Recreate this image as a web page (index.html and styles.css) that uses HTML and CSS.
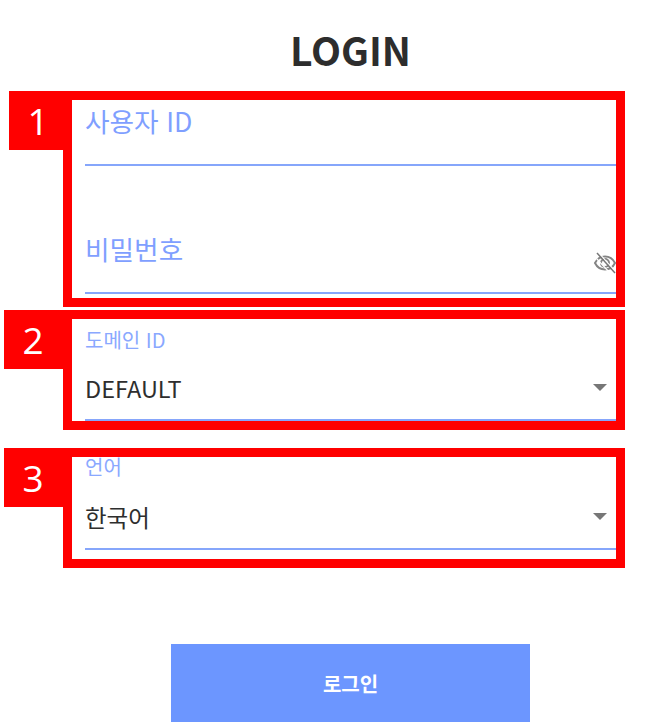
FILE: index.html
```html
<!DOCTYPE html>
<html lang="ko">
<head>
    <meta charset="UTF-8">
    <meta name="viewport" content="width=device-width, initial-scale=1.0">
    <title>LOGIN</title>
    <link rel="stylesheet" href="styles.css">
</head>
<body>
    <h1 class="title">LOGIN</h1>

    <form class="login-form">
        <!-- 1: 계정 -->
        <div class="group group-account">
            <div class="badge badge-wide">1</div>
            <div class="field field-id">
                <span class="field-label">사용자 ID</span>
            </div>
            <div class="field field-password">
                <span class="field-label">비밀번호</span>
                <svg class="eye-icon" viewBox="0 0 24 24" width="24" height="24" fill="none" stroke="#858585" stroke-width="2">
                    <path d="M2 12C4 8 7.500 5.500 12 5.500S20 8 22 12c-2 4-5.500 6.500-10 6.500S4 16 2 12z"/>
                    <circle cx="12" cy="12" r="4"/>
                    <path d="M7 3.500l15 16.500M3.500 7.500l13 14" stroke="#fff" stroke-width="1.200"/>
                    <path d="M4 2l18 20" stroke="#777" stroke-width="1.500"/>
                </svg>
            </div>
        </div>

        <!-- 2: 도메인 -->
        <div class="group group-domain">
            <div class="badge">2</div>
            <div class="field field-select">
                <span class="select-label">도메인 ID</span>
                <span class="select-value">DEFAULT</span>
                <span class="arrow"></span>
            </div>
        </div>

        <!-- 3: 언어 -->
        <div class="group group-lang">
            <div class="badge">3</div>
            <div class="field field-select">
                <span class="select-label">언어</span>
                <span class="select-value">한국어</span>
                <span class="arrow"></span>
            </div>
        </div>

        <button class="btn" type="button">로그인</button>
    </form>
</body>
</html>
```

FILE: styles.css
```css
body {
    margin: 0;
    background: #fff;
    font-family: "Noto Sans CJK KR", "Noto Sans", sans-serif;
    color: #2b2b2b;
}
.title {
    margin: 0;
    padding-left: 38px;
    height: 91px;
    line-height: 98px;
    font-size: 39px;
    font-weight: 700;
    text-align: center;
    color: #2d2d2d;
}
.login-form {
    display: flex;
    flex-direction: column;
    width: 562px;
    margin-left: 63px;
}

/* 빨간 표시 박스 */
.group {
    position: relative;
    box-sizing: border-box;
    border: 9px solid #f00;
    padding-left: 13px;
    background: #fff;
}
.group-account { height: 216px; }
.group-domain { height: 120px; margin-top: 3px; }
.group-lang { height: 120px; margin-top: 18px; }
.badge {
    position: absolute;
    top: -9px;
    left: -68px;
    box-sizing: border-box;
    width: 68px;
    height: 59px;
    padding-right: 10px;
    background: #f00;
    color: #fff;
    font-family: "Open Sans", sans-serif;
    font-size: 37px;
    line-height: 59px;
    text-align: center;
}
.badge-wide {
    left: -63px;
    width: 63px;
    padding-right: 5px;
}

/* 입력 필드 */
.field {
    position: relative;
    box-sizing: border-box;
    border-bottom: 2px solid #86a6fb;
}
.field-id { height: 66px; }
.field-password { height: 128px; }
.field-label {
    display: block;
    font-size: 26.7px;
    line-height: 42px;
    color: #7f9fff;
}
.field-password .field-label { padding-top: 62px; }
.eye-icon {
    position: absolute;
    right: -1px;
    top: 85px;
}
.field-select {
    display: flex;
    flex-direction: column;
    height: 102px;
}
.group-lang .field-select { height: 98px; margin-top: -5px; }
.select-label {
    margin-top: 8px;
    font-size: 20px;
    line-height: 26px;
    color: #8aa8ff;
}
.group-lang .select-label { margin-top: 2px; }
.select-value {
    margin-top: 18px;
    font-size: 23.5px;
    line-height: 34px;
    color: #2e2e2e;
}
.group-lang .select-value { font-size: 23.5px; margin-top: 20px; }
.arrow {
    position: absolute;
    right: 9px;
    top: 65px;
    width: 0;
    height: 0;
    border-left: 7px solid transparent;
    border-right: 7px solid transparent;
    border-top: 7px solid #777;
}
.group-lang .arrow { top: 61px; }

.btn {
    align-self: flex-start;
    width: 359px;
    height: 78px;
    margin-top: 76px;
    margin-left: 108px;
    border: none;
    background: #6c96ff;
    color: #fff;
    font-family: inherit;
    font-size: 20px;
    font-weight: 700;
}
```
